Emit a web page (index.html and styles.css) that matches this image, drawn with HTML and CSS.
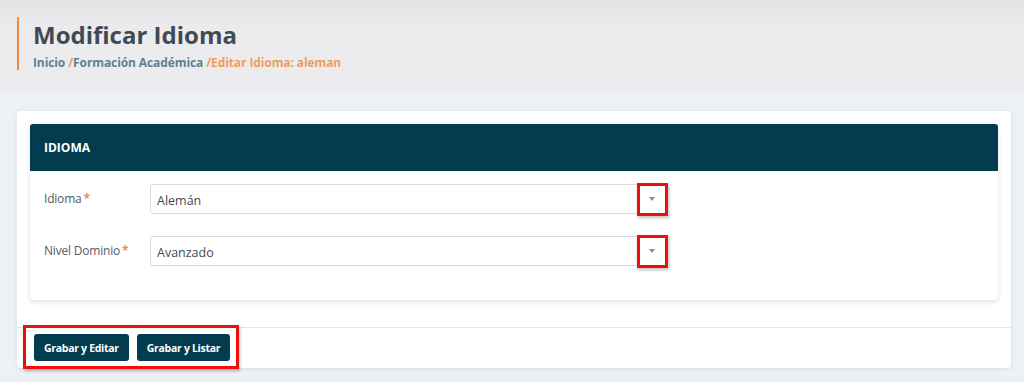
FILE: index.html
```html
<!DOCTYPE html>
<html lang="es">
<head>
<meta charset="utf-8">
<title>Modificar Idioma</title>
<link rel="stylesheet" href="styles.css">
</head>
<body>
<header class="page-header">
  <div class="title-block">
    <h1 class="title">Modificar Idioma</h1>
    <nav class="crumbs">
      <span class="crumb">Inicio</span>
      <span class="sep">/</span><span class="crumb">Formación Académica</span>
      <span class="sep">/</span><span class="current">Editar Idioma: aleman</span>
    </nav>
  </div>
</header>
<main class="content">
  <section class="outer-card">
    <div class="inner-wrap">
      <div class="inner-card">
        <div class="card-head">IDIOMA</div>
        <div class="card-body">
          <div class="form-row">
            <label class="label">Idioma<span class="req">*</span></label>
            <div class="select">
              <span class="value">Alemán</span>
              <span class="arrow"></span>
              <span class="mark"></span>
            </div>
          </div>
          <div class="form-row">
            <label class="label">Nivel Dominio<span class="req">*</span></label>
            <div class="select">
              <span class="value">Avanzado</span>
              <span class="arrow"></span>
              <span class="mark"></span>
            </div>
          </div>
        </div>
      </div>
    </div>
    <div class="footer">
      <button class="btn">Grabar y Editar</button>
      <button class="btn">Grabar y Listar</button>
      <span class="mark footer-mark"></span>
    </div>
  </section>
</main>
</body>
</html>
```
FILE: styles.css
```css
* { box-sizing: border-box; }
html, body { margin: 0; padding: 0; }
body {
  background: #eef1f4;
  font-family: "Open Sans", "Noto Sans", sans-serif;
  width: 1024px;
  height: 382px;
  overflow: hidden;
}
.page-header {
  height: 90px;
  background: linear-gradient(#e4e4e6, #ebebed 30%, #ececee);
  padding: 17px 0 0 17px;
}
.title-block {
  border-left: 2px solid #f0883a;
  height: 53px;
  padding-left: 14px;
}
.title {
  margin: 0;
  padding-top: 4px;
  font-size: 24px;
  line-height: 28px;
  font-weight: 700;
  color: #404a55;
}
.crumbs {
  margin-top: 6px;
  font-size: 12px;
  line-height: 16px;
  font-weight: 700;
  color: #5e818f;
  white-space: nowrap;
  letter-spacing: -0.1px;
}
.crumb { color: #5e818f; }
.sep, .current { color: #ef9d5c; }
.content {
  padding: 21px 13px 0 17px;
}
.outer-card {
  position: relative;
  background: #fff;
  border-radius: 4px;
  box-shadow: 0 1px 4px rgba(0,0,0,0.08);
  height: 257px;
}
.inner-wrap {
  padding: 13px 13px 0 13px;
}
.inner-card {
  background: #fff;
  border-radius: 3px;
  box-shadow: 0 2px 5px rgba(0,0,0,0.12);
  height: 176px;
}
.card-head {
  height: 47px;
  background: #033b4f;
  color: #fff;
  font-size: 12px;
  font-weight: 700;
  padding: 0 14px;
  display: flex;
  align-items: center;
  border-radius: 3px 3px 0 0;
}
.card-body {
  padding: 13px 14px 0 14px;
  display: flex;
  flex-direction: column;
  gap: 22px;
}
.form-row {
  display: flex;
  align-items: center;
  height: 30px;
}
.label {
  width: 106px;
  font-size: 12px;
  color: #555b62;
  padding-bottom: 2px;
  letter-spacing: -0.2px;
}
.req {
  color: #ef8f4a;
  margin-left: 2px;
  font-weight: 700;
}
.select {
  position: relative;
  width: 517px;
  height: 30px;
  border: 1px solid #d9d9de;
  border-radius: 3px;
  display: flex;
  align-items: center;
  padding: 2px 6px 0 6px;
}
.value {
  font-size: 12.5px;
  color: #45494f;
  flex: 1;
}
.arrow {
  width: 0;
  height: 0;
  border-left: 3.5px solid transparent;
  border-right: 3.5px solid transparent;
  border-top: 4px solid #8a8d92;
  margin-right: 5px;
  margin-top: -2px;
}
.mark {
  position: absolute;
  border: 3px solid #f20d0d;
  box-shadow: 1px 2px 3px rgba(0,0,0,0.25);
}
.select .mark {
  right: -2px;
  top: -2px;
  width: 31px;
  height: 33px;
}
.footer {
  position: absolute;
  left: 0;
  right: 0;
  bottom: 0;
  height: 41px;
  border-top: 1px solid #e6e6e6;
  display: flex;
  align-items: flex-start;
  gap: 8px;
  padding: 6px 0 0 17px;
}
.btn {
  height: 27px;
  border: none;
  border-radius: 3px;
  background: #033b4f;
  color: #fff;
  font-family: "Open Sans", "Noto Sans", sans-serif;
  font-size: 10.5px;
  letter-spacing: -0.3px;
  font-weight: 700;
  padding: 0 10px;
  cursor: pointer;
}
.footer-mark {
  left: 6px;
  top: -3px;
  width: 216px;
  height: 44px;
}
```
